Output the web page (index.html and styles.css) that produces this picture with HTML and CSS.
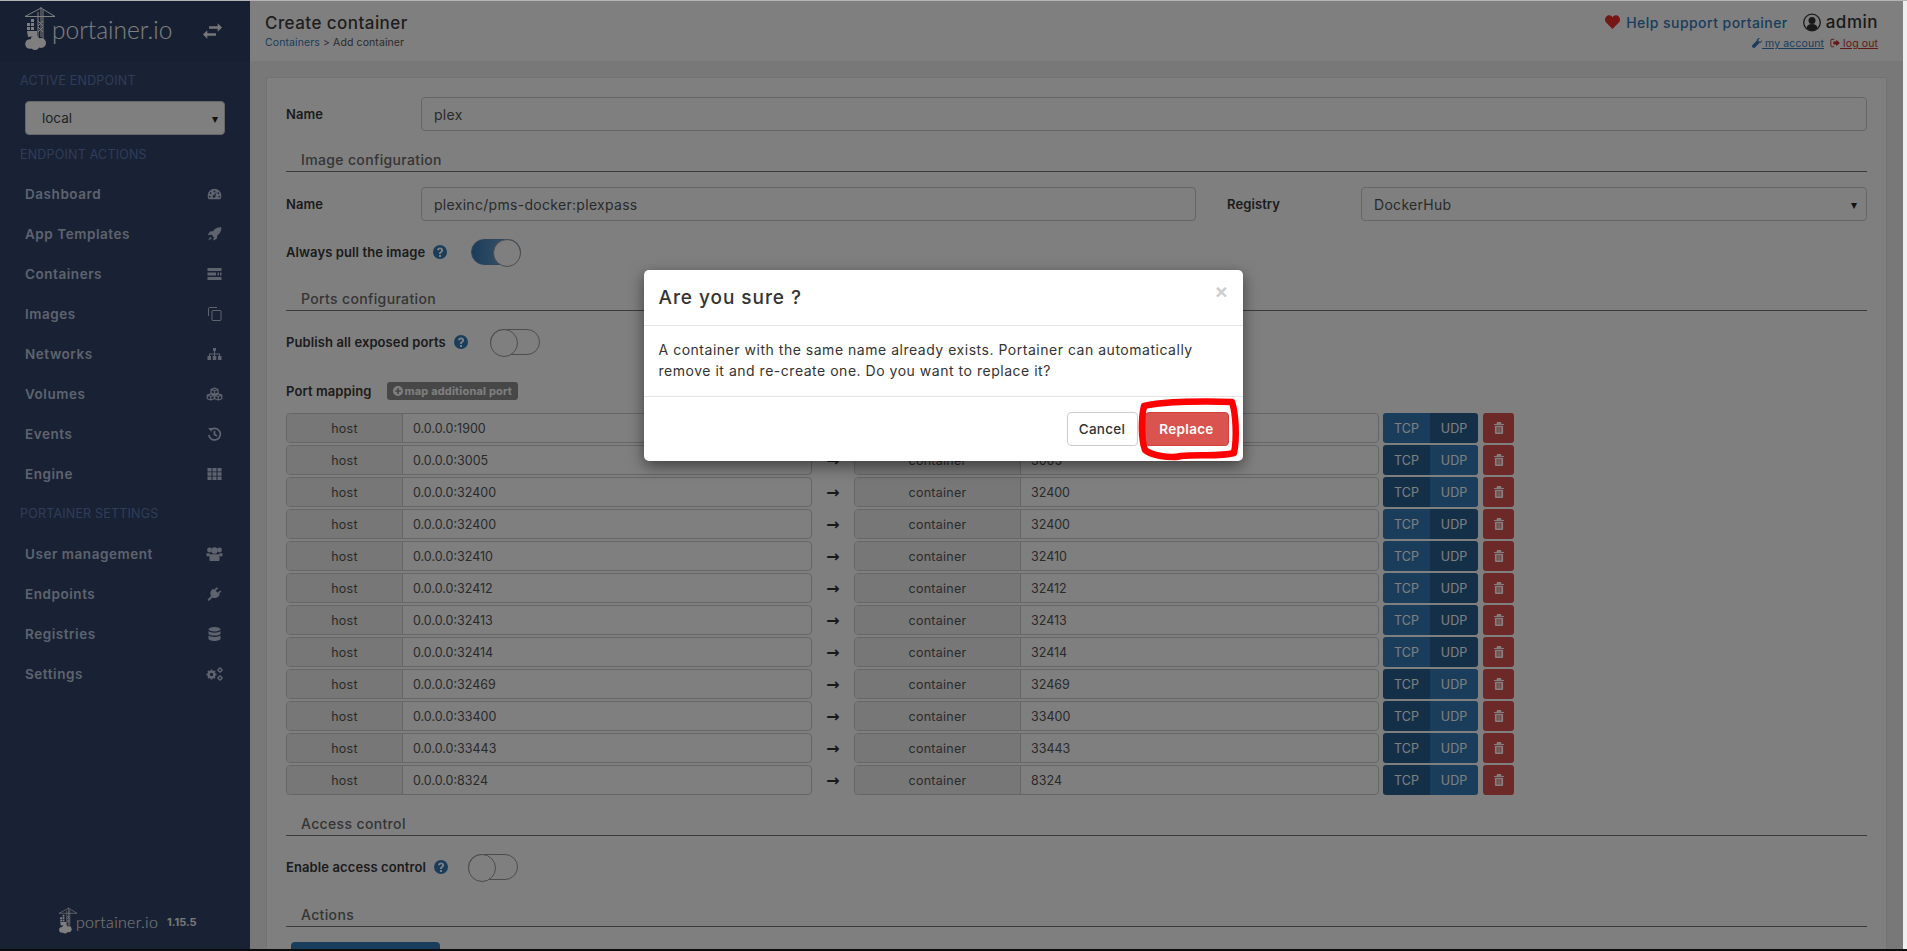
FILE: index.html
```html
<!DOCTYPE html>
<html lang="en">
<head>
<meta charset="utf-8">
<title>Create container</title>
<link rel="stylesheet" href="styles.css">
</head>
<body>
<svg class="defs" width="0" height="0" aria-hidden="true">
  <symbol id="logo" viewBox="0 0 30 43">
    <g fill="none" stroke="currentColor" stroke-width="1">
      <path d="M0 9.500 16 1 30 9.500M0 9.500H30M16 0V30M13 5V30M18 3V34M13 14 18 19M18 14 13 19M13 20 18 25M18 20 13 25"/>
    </g>
    <g fill="currentColor">
      <rect x="2" y="16" width="3" height="3"/><rect x="6" y="16" width="3" height="3"/>
      <rect x="6" y="12" width="3" height="3"/>
      <rect x="2" y="20" width="3" height="3"/><rect x="6" y="20" width="3" height="3"/>
      <path d="M2 24H12V29L3 30Z"/>
      <circle cx="5" cy="37" r="4.800"/><circle cx="10" cy="33" r="4.500"/><circle cx="16" cy="36" r="5"/><circle cx="10" cy="38.500" r="4.500"/>
    </g>
  </symbol>
  <symbol id="i-dash" viewBox="0 0 16 14"><path fill="currentColor" fill-rule="evenodd" d="M8 1a8 8 0 0 1 8 8c0 1.600-.4 3-1.200 4H1.200C.4 12 0 10.600 0 9a8 8 0 0 1 8-8ZM8 3a1 1 0 1 0 0 2 1 1 0 0 0 0-2ZM3.500 5a1 1 0 1 0 0 2 1 1 0 0 0 0-2ZM12.500 5a1 1 0 1 0 0 2 1 1 0 0 0 0-2ZM2.500 9a1 1 0 1 0 0 2 1 1 0 0 0 0-2ZM13.500 9a1 1 0 1 0 0 2 1 1 0 0 0 0-2ZM10.600 4.700 7.500 8.100a1.600 1.600 0 1 0 1.500.9Z"/></symbol>
  <symbol id="i-rocket" viewBox="0 0 14 14"><path fill="currentColor" d="M13.800.2c.3 3.700-1.200 6.300-4 8.300l-.4 3-3 2-.6-.7.6-2.600L3.800 7.600l-2.600.6L.5 7.600l2-3 3-.4C7.500 1.400 10.100-.1 13.800.2ZM2.600 9.700l1.700 1.700L.8 13.200Z"/></symbol>
  <symbol id="i-server" viewBox="0 0 14 12"><path fill="currentColor" d="M0 0h14v3H0ZM0 4.500h8.500v3H0ZM10 4.500h1.500v3H10ZM12.500 4.500H14v3h-1.500ZM0 9h14v3H0Z"/></symbol>
  <symbol id="i-clone" viewBox="0 0 14 14"><path fill="none" stroke="currentColor" stroke-width="1" d="M1 9V1.500a1 1 0 0 1 1-1h7.500M5 3.500h8a.6.600 0 0 1 .5.500v9a.6.600 0 0 1-.5.500H5a.6.600 0 0 1-.5-.500V4a.6.600 0 0 1 .5-.5Z"/></symbol>
  <symbol id="i-sitemap" viewBox="0 0 14 12"><path fill="currentColor" d="M5.500 0h3v3h-3ZM6.500 3h1v2.500h5v2.500h-1V6.500h-4V8h-1V6.500h-4V8h-1V5.500h5ZM0 8h3.500v4H0ZM5.200 8h3.600v4H5.200ZM10.500 8H14v4h-3.500Z"/></symbol>
  <symbol id="i-cubes" viewBox="0 0 18 14"><g fill="none" stroke="currentColor" stroke-width="1.300" stroke-linejoin="round"><path d="M9 .8 12.700 2.200V6L9 7.400 5.300 6V2.200ZM5.300 2.200 9 3.600 12.700 2.200M9 3.600V7.400"/><path d="M5 6.800 8.700 8.200V12L5 13.400 1.300 12V8.200ZM1.300 8.200 5 9.600 8.700 8.200M5 9.600V13.400"/><path d="M13 6.800 16.700 8.200V12L13 13.400 9.300 12V8.200ZM9.300 8.200 13 9.600 16.700 8.200M13 9.600V13.400"/></g></symbol>
  <symbol id="i-history" viewBox="0 0 14 14"><path fill="none" stroke="currentColor" stroke-width="1.700" d="M2.600 3.400A5.800 5.800 0 1 1 1.300 8M7 3.800V7.500L9.500 9"/><path fill="currentColor" d="M.5 1h3.800v3.800Z"/></symbol>
  <symbol id="i-th" viewBox="0 0 14 12"><path fill="currentColor" d="M0 0h4v3.400H0ZM5 0h4v3.400H5ZM10 0h4v3.400h-4ZM0 4.300h4v3.400H0ZM5 4.300h4v3.400H5ZM10 4.300h4v3.400h-4ZM0 8.600h4V12H0ZM5 8.600h4V12H5ZM10 8.600h4V12h-4Z"/></symbol>
  <symbol id="i-users" viewBox="0 0 16 14"><g fill="currentColor"><circle cx="3" cy="3" r="2.400"/><circle cx="13" cy="3" r="2.400"/><circle cx="8" cy="3.500" r="3.200"/><path d="M0 6.300h3.300c-.3 1-.3 2 0 3H.8C.2 9.300 0 8.900 0 8.400ZM16 6.300h-3.300c.3 1 .3 2 0 3h2.500c.6 0 .8-.4.8-.9ZM4 7.200h8c.8 0 1 1 1 2.500V13c0 .6-.4 1-1 1H4c-.6 0-1-.4-1-1V9.700C3 8.200 3.200 7.200 4 7.200Z"/></g></symbol>
  <symbol id="i-plug" viewBox="0 0 14 14"><path fill="currentColor" d="M9.400.2 10.600 1.400 8.200 3.800 10.200 5.800 12.600 3.400l1.200 1.200-2.400 2.400 1 1-1.300 1.300C9.400 11.400 7 11.500 5 10.400L3 12.500 1 14 0 13l1.500-2L3.600 9C2.500 7 2.600 4.600 4.200 3L5.500 1.700l1 1Z"/></symbol>
  <symbol id="i-db" viewBox="0 0 12 14"><g fill="currentColor"><ellipse cx="6" cy="2.200" rx="6" ry="2.200"/><path d="M0 4c1 1.200 3.200 1.700 6 1.700S11 5.200 12 4v2.400c0 1.200-2.700 2.200-6 2.200S0 7.600 0 6.400ZM0 8.200c1 1.200 3.200 1.700 6 1.700s5-.5 6-1.700v3.600C12 13 9.300 14 6 14s-6-1-6-2.200Z"/></g></symbol>
  <symbol id="i-cogs" viewBox="0 0 17 14"><g fill="none" stroke="currentColor"><circle cx="5.500" cy="7.500" r="2.800" stroke-width="2.200"/><path stroke-width="1.800" d="M5.500 2.500V4.500M5.500 10.500v2M.5 7.500h2M8.500 7.500h2M2 4l1.400 1.400M7.600 9.600 9 11M9 4 7.600 5.400M3.400 9.600 2 11"/><circle cx="14" cy="3" r="1.700" stroke-width="1.300"/><circle cx="14" cy="11" r="1.700" stroke-width="1.300"/><path stroke-width="1" d="M14 0V1M14 5V6M11 3H12M16 3H17M14 8V9M14 13V14M11 11H12M16 11H17"/></g></symbol>
  <symbol id="i-help" viewBox="0 0 14 14"><path fill="currentColor" fill-rule="evenodd" d="M7 0a7 7 0 1 1 0 14A7 7 0 0 1 7 0ZM6 10v2h2v-2ZM7 2.500C5.300 2.500 4.200 3.400 4 5l1.800.4c.1-.8.500-1.200 1.200-1.200.6 0 1.100.4 1.100 1 0 .5-.3.800-.9 1.200C6.400 6.900 6 7.500 6 8.500V9h2v-.3c0-.5.200-.8.800-1.200.9-.6 1.300-1.300 1.300-2.300 0-1.600-1.300-2.700-3.100-2.700Z"/></symbol>
  <symbol id="i-heart" viewBox="0 0 14 13"><path fill="currentColor" d="M7 13 1 7C-.4 5.500-.3 2.800 1.200 1.300 2.900-.3 5.400 0 7 2c1.600-2 4.100-2.300 5.800-.7 1.500 1.500 1.600 4.200.2 5.700Z"/></symbol>
  <symbol id="i-user" viewBox="0 0 18 18"><circle cx="9" cy="9" r="8.300" fill="none" stroke="currentColor" stroke-width="1.300"/><circle cx="9" cy="7" r="3.500" fill="currentColor"/><path fill="currentColor" d="M3.500 15c.2-3 2-4.500 5.500-4.500s5.300 1.500 5.500 4.500c-3 2.600-8 2.600-11 0Z"/></symbol>
  <symbol id="i-wrench" viewBox="0 0 12 12"><path fill="currentColor" d="M11.800 2.600c.5 1.800-.9 3.700-2.900 3.500L3 12 .5 11.500 0 9l5.900-5.900C5.700 1.100 7.600-.3 9.400.2L7.500 2.100l.4 2 2 .4Z"/></symbol>
  <symbol id="i-signout" viewBox="0 0 12 11"><path fill="none" stroke="currentColor" stroke-width="1.200" d="M5 1H2a1 1 0 0 0-1 1v7a1 1 0 0 0 1 1h3"/><path fill="currentColor" d="M4 3.800h3.500V1.500L11.800 5.500 7.500 9.500V7.200H4Z"/></symbol>
  <symbol id="i-swap" viewBox="0 0 22 18"><path fill="currentColor" d="M7 3.500h10V0l5 5-5 5V6.500H7ZM5 8v3.500h10v3H5V18l-5-5Z"/></symbol>
  <symbol id="i-trash" viewBox="0 0 11 13"><path fill="currentColor" fill-rule="evenodd" d="M3.500 0h4l.8 2H11v1.200H0V2h2.700ZM1 4h9v8a1 1 0 0 1-1 1H2a1 1 0 0 1-1-1ZM3 5.500v6h.9v-6ZM5 5.500v6h.9v-6ZM7 5.500v6h.9v-6Z"/></symbol>
  <symbol id="i-plus" viewBox="0 0 12 12"><path fill="currentColor" fill-rule="evenodd" d="M6 0a6 6 0 1 1 0 12A6 6 0 0 1 6 0ZM5 2.500V5H2.500v2H5v2.500h2V7h2.500V5H7V2.500Z"/></symbol>
</svg>

<div class="line-top"></div>
<div class="screen">
  <div class="app">
    <aside class="sidebar">
      <div class="brand">
        <svg class="brand-logo"><use href="#logo"/></svg>
        <span class="brand-name">portainer.io</span>
        <svg class="brand-swap"><use href="#i-swap"/></svg>
      </div>
      <div class="side-head side-head-first">ACTIVE ENDPOINT</div>
      <div class="endpoint"><span>local</span><span class="caret">▾</span></div>
      <div class="side-head side-head-actions">ENDPOINT ACTIONS</div>
      <nav class="nav">
        <a class="nav-item"><span>Dashboard</span><svg class="nav-icon icon-sm"><use href="#i-dash"/></svg></a>
        <a class="nav-item"><span>App Templates</span><svg class="nav-icon"><use href="#i-rocket"/></svg></a>
        <a class="nav-item"><span>Containers</span><svg class="nav-icon icon-sm"><use href="#i-server"/></svg></a>
        <a class="nav-item"><span>Images</span><svg class="nav-icon"><use href="#i-clone"/></svg></a>
        <a class="nav-item"><span>Networks</span><svg class="nav-icon icon-sm"><use href="#i-sitemap"/></svg></a>
        <a class="nav-item"><span>Volumes</span><svg class="nav-icon"><use href="#i-cubes"/></svg></a>
        <a class="nav-item"><span>Events</span><svg class="nav-icon"><use href="#i-history"/></svg></a>
        <a class="nav-item"><span>Engine</span><svg class="nav-icon icon-sm"><use href="#i-th"/></svg></a>
      </nav>
      <div class="side-head side-head-nav">PORTAINER SETTINGS</div>
      <nav class="nav">
        <a class="nav-item"><span>User management</span><svg class="nav-icon"><use href="#i-users"/></svg></a>
        <a class="nav-item"><span>Endpoints</span><svg class="nav-icon"><use href="#i-plug"/></svg></a>
        <a class="nav-item"><span>Registries</span><svg class="nav-icon"><use href="#i-db"/></svg></a>
        <a class="nav-item"><span>Settings</span><svg class="nav-icon"><use href="#i-cogs"/></svg></a>
      </nav>
      <div class="side-foot">
        <svg class="foot-logo"><use href="#logo"/></svg>
        <span class="foot-name">portainer.io</span>
        <span class="foot-ver">1.15.5</span>
      </div>
    </aside>

    <main class="main">
      <header class="topbar">
        <div>
          <div class="page-title">Create container</div>
          <div class="crumbs"><a class="link">Containers</a> &gt; Add container</div>
        </div>
        <div class="account">
          <div class="account-top">
            <svg class="ic-heart"><use href="#i-heart"/></svg>
            <a class="link help">Help support portainer</a>
            <svg class="ic-user"><use href="#i-user"/></svg>
            <span class="admin">admin</span>
          </div>
          <div class="account-links">
            <a class="link acc-link"><svg class="ic-small"><use href="#i-wrench"/></svg> my account </a>
            <a class="logout acc-link"><svg class="ic-small"><use href="#i-signout"/></svg> log out</a>
          </div>
        </div>
      </header>

      <section class="content">
        <div class="panel">
          <div class="form-row row-name">
            <label class="label label-w">Name</label>
            <div class="input grow">plex</div>
          </div>
          <div class="section s-image">Image configuration</div>
          <div class="form-row row-image">
            <label class="label label-w">Name</label>
            <div class="input image-input">plexinc/pms-docker:plexpass</div>
            <label class="label registry-label">Registry</label>
            <div class="input grow select">DockerHub<span class="caret dark">▾</span></div>
          </div>
          <div class="form-row row-pull">
            <label class="label">Always pull the image</label>
            <svg class="ic-help"><use href="#i-help"/></svg>
            <span class="toggle on pull-toggle"></span>
          </div>
          <div class="section s-ports">Ports configuration</div>
          <div class="form-row row-publish">
            <label class="label">Publish all exposed ports</label>
            <svg class="ic-help"><use href="#i-help"/></svg>
            <span class="toggle pub-toggle"></span>
          </div>
          <div class="form-row row-map">
            <label class="label">Port mapping</label>
            <span class="badge"><svg class="ic-plus"><use href="#i-plus"/></svg>map additional port</span>
          </div>

          <div class="ports">
            <div class="port"><div class="group g-host"><span class="addon">host</span><span class="val">0.0.0.0:1900</span></div><span class="arrow">→</span><div class="group g-cont"><span class="addon a-cont">container</span><span class="val">1900</span></div><div class="proto"><span class="p">TCP</span><span class="p act">UDP</span></div><button class="del"><svg class="ic-trash"><use href="#i-trash"/></svg></button></div>
            <div class="port"><div class="group g-host"><span class="addon">host</span><span class="val">0.0.0.0:3005</span></div><span class="arrow">→</span><div class="group g-cont"><span class="addon a-cont">container</span><span class="val">3005</span></div><div class="proto"><span class="p act">TCP</span><span class="p">UDP</span></div><button class="del"><svg class="ic-trash"><use href="#i-trash"/></svg></button></div>
            <div class="port"><div class="group g-host"><span class="addon">host</span><span class="val">0.0.0.0:32400</span></div><span class="arrow">→</span><div class="group g-cont"><span class="addon a-cont">container</span><span class="val">32400</span></div><div class="proto"><span class="p act">TCP</span><span class="p">UDP</span></div><button class="del"><svg class="ic-trash"><use href="#i-trash"/></svg></button></div>
            <div class="port"><div class="group g-host"><span class="addon">host</span><span class="val">0.0.0.0:32400</span></div><span class="arrow">→</span><div class="group g-cont"><span class="addon a-cont">container</span><span class="val">32400</span></div><div class="proto"><span class="p">TCP</span><span class="p act">UDP</span></div><button class="del"><svg class="ic-trash"><use href="#i-trash"/></svg></button></div>
            <div class="port"><div class="group g-host"><span class="addon">host</span><span class="val">0.0.0.0:32410</span></div><span class="arrow">→</span><div class="group g-cont"><span class="addon a-cont">container</span><span class="val">32410</span></div><div class="proto"><span class="p">TCP</span><span class="p act">UDP</span></div><button class="del"><svg class="ic-trash"><use href="#i-trash"/></svg></button></div>
            <div class="port"><div class="group g-host"><span class="addon">host</span><span class="val">0.0.0.0:32412</span></div><span class="arrow">→</span><div class="group g-cont"><span class="addon a-cont">container</span><span class="val">32412</span></div><div class="proto"><span class="p">TCP</span><span class="p act">UDP</span></div><button class="del"><svg class="ic-trash"><use href="#i-trash"/></svg></button></div>
            <div class="port"><div class="group g-host"><span class="addon">host</span><span class="val">0.0.0.0:32413</span></div><span class="arrow">→</span><div class="group g-cont"><span class="addon a-cont">container</span><span class="val">32413</span></div><div class="proto"><span class="p">TCP</span><span class="p act">UDP</span></div><button class="del"><svg class="ic-trash"><use href="#i-trash"/></svg></button></div>
            <div class="port"><div class="group g-host"><span class="addon">host</span><span class="val">0.0.0.0:32414</span></div><span class="arrow">→</span><div class="group g-cont"><span class="addon a-cont">container</span><span class="val">32414</span></div><div class="proto"><span class="p">TCP</span><span class="p act">UDP</span></div><button class="del"><svg class="ic-trash"><use href="#i-trash"/></svg></button></div>
            <div class="port"><div class="group g-host"><span class="addon">host</span><span class="val">0.0.0.0:32469</span></div><span class="arrow">→</span><div class="group g-cont"><span class="addon a-cont">container</span><span class="val">32469</span></div><div class="proto"><span class="p act">TCP</span><span class="p">UDP</span></div><button class="del"><svg class="ic-trash"><use href="#i-trash"/></svg></button></div>
            <div class="port"><div class="group g-host"><span class="addon">host</span><span class="val">0.0.0.0:33400</span></div><span class="arrow">→</span><div class="group g-cont"><span class="addon a-cont">container</span><span class="val">33400</span></div><div class="proto"><span class="p act">TCP</span><span class="p">UDP</span></div><button class="del"><svg class="ic-trash"><use href="#i-trash"/></svg></button></div>
            <div class="port"><div class="group g-host"><span class="addon">host</span><span class="val">0.0.0.0:33443</span></div><span class="arrow">→</span><div class="group g-cont"><span class="addon a-cont">container</span><span class="val">33443</span></div><div class="proto"><span class="p act">TCP</span><span class="p">UDP</span></div><button class="del"><svg class="ic-trash"><use href="#i-trash"/></svg></button></div>
            <div class="port"><div class="group g-host"><span class="addon">host</span><span class="val">0.0.0.0:8324</span></div><span class="arrow">→</span><div class="group g-cont"><span class="addon a-cont">container</span><span class="val">8324</span></div><div class="proto"><span class="p act">TCP</span><span class="p">UDP</span></div><button class="del"><svg class="ic-trash"><use href="#i-trash"/></svg></button></div>
          </div>

          <div class="section s-access">Access control</div>
          <div class="form-row row-access">
            <label class="label">Enable access control</label>
            <svg class="ic-help"><use href="#i-help"/></svg>
            <span class="toggle access-toggle"></span>
          </div>
          <div class="section s-actions">Actions</div>
          <div class="deploy"></div>
        </div>
      </section>
    </main>

    <div class="backdrop">
      <div class="modal">
        <div class="modal-head">
          <span class="modal-title">Are you sure ?</span>
          <span class="modal-close">×</span>
        </div>
        <div class="modal-body">A container with the same name already exists. Portainer can automatically remove it and re-create one. Do you want to replace it?</div>
        <div class="modal-foot">
          <button class="btn btn-cancel">Cancel</button>
          <button class="btn btn-replace">Replace</button>
          <svg class="ring" viewBox="0 0 100 62" preserveAspectRatio="none"><path d="M5 7C25 2 70 2 93 3 97 15 98 40 95 54 80 58 60 55 42 57 30 60 12 56 6 51 2 40 2 20 5 7Z" fill="none" stroke="#f00" stroke-width="6.500" stroke-linejoin="round"/></svg>
        </div>
      </div>
    </div>
  </div>
  <div class="line-right"></div>
</div>
<div class="line-bottom"></div>
</body>
</html>
```

FILE: styles.css
```css
* { box-sizing: border-box; }
html, body { margin: 0; padding: 0; height: 951px; overflow: hidden; }
body {
  display: flex;
  flex-direction: column;
  font-family: Inter, "Open Sans", "Liberation Sans", sans-serif;
  font-size: 13px;
  color: #383838;
  background: #fff;
}
.defs { position: absolute; }
a { text-decoration: none; }

.line-top { height: 1px; background: #b4b4b4; flex: none; }
.line-bottom { height: 2px; background: #0c0c0c; flex: none; }
.line-right { width: 4px; background: #efefef; flex: none; }
.screen { flex: 1; display: flex; min-height: 0; }
.app { flex: 1; display: flex; position: relative; min-width: 0; overflow: hidden; }

/* sidebar */
.sidebar {
  width: 250px;
  flex: none;
  background: #324268;
  color: #bcc7dc;
  display: flex;
  flex-direction: column;
}
.brand {
  height: 60px;
  background: #2f3f64;
  color: #fff;
  display: flex;
  align-items: flex-start;
  padding: 6px 0 0 25px;
  flex: none;
}
.brand-logo { width: 30px; height: 43px; flex: none; }
.brand-name {
  font-family: Lato, sans-serif;
  font-weight: 300;
  font-size: 24.500px;
  line-height: 30px;
  margin: 8px 0 0 -3px;
  width: 152px;
  letter-spacing: 0;
}
.brand-swap { width: 19px; height: 16px; margin-top: 16px; margin-left: -1px; color: #eee; }
.side-head { color: #5f7bb4; font-size: 12.500px; line-height: 16px; padding-left: 20px; letter-spacing: .2px; flex: none; }
.side-head-first { margin-top: 12px; }
.endpoint {
  margin: 12px 25px 0;
  width: 200px;
  height: 34px;
  background: #fff;
  border: 1px solid #ccc;
  border-radius: 4px;
  color: #444;
  font-size: 13.500px;
  display: flex;
  justify-content: space-between;
  align-items: center;
  padding: 0 6px 0 16px;
  flex: none;
}
.caret { font-size: 12px; color: #222; }
.side-head-actions { margin-top: 12px; }
.side-head-nav { margin-top: 12px; margin-bottom: 12px; }
.nav { display: flex; flex-direction: column; flex: none; }
.side-head-actions + .nav { margin-top: 11px; }
.nav-item {
  height: 40px;
  display: flex;
  align-items: center;
  justify-content: space-between;
  padding: 0 27px 0 25px;
  font-weight: 600;
  font-size: 13.500px;
  letter-spacing: .55px;
  color: #bcc7dc;
}
.nav-icon { width: 17px; height: 14px; color: #bcc7dc; }
.icon-sm { height: 12px; }
.side-foot {
  margin-top: auto;
  height: 42px;
  display: flex;
  align-items: flex-start;
  padding-left: 59px;
  color: #fff;
  flex: none;
}
.foot-logo { width: 18px; height: 27px; flex: none; }
.foot-name { font-family: Lato, sans-serif; font-weight: 300; font-size: 16px; line-height: 20px; margin: 5px 0 0 -1px; width: 91px; letter-spacing: .3px; }
.foot-ver { font-size: 11px; font-weight: 700; line-height: 20px; margin-top: 5px; color: #f0f0f0; }

/* main */
.main { flex: 1; min-width: 0; background: #f0f0f0; display: flex; flex-direction: column; }
.topbar {
  height: 60px;
  background: #fff;
  flex: none;
  display: flex;
  justify-content: space-between;
  padding: 11px 25px 0 15px;
}
.page-title { font-size: 17px; line-height: 20px; font-weight: 500; letter-spacing: .45px; color: #3c3c3c; margin-top: 1px; }
.crumbs { font-size: 10.500px; line-height: 14px; margin-top: 3px; color: #555; letter-spacing: .1px; }
.link { color: #337ab7; }
.account { text-align: right; }
.account-top { display: flex; align-items: center; justify-content: flex-end; height: 20px; }
.ic-heart { width: 15px; height: 14px; color: #f02a2a; margin-right: 6px; }
.help { font-size: 14px; letter-spacing: .45px; font-weight: 500; margin-right: 15px; }
.ic-user { width: 18px; height: 19px; color: #333; margin-right: 5px; }
.admin { font-size: 17px; font-weight: 500; letter-spacing: .5px; color: #333; }
.account-links { display: flex; justify-content: flex-end; gap: 6px; font-size: 10.500px; line-height: 13px; margin-top: 5px; letter-spacing: .1px; }
.acc-link { text-decoration: underline; }
.logout { color: #c9302c; }
.ic-small { width: 10px; height: 10px; vertical-align: -1px; }

.content { flex: 1; padding: 16px 16px 0 16px; min-height: 0; overflow: hidden; }
.panel {
  background: #fff;
  border: 1px solid #e4e4e4;
  border-bottom: 0;
  padding: 19px 19px 0 19px;
  height: 880px;
}
.form-row { display: flex; align-items: center; }
.label { font-weight: 600; font-size: 13px; letter-spacing: .1px; color: #383838; }
.label-w { width: 135px; flex: none; }
.input {
  height: 34px;
  border: 1px solid #ccc;
  border-radius: 4px;
  background: #fff;
  color: #555;
  font-size: 14px;
  letter-spacing: .3px;
  display: flex;
  align-items: center;
  padding: 0 12px;
}
.grow { flex: 1; }
.image-input { width: 775px; flex: none; }
.registry-label { width: 134px; margin-left: 31px; flex: none; }
.select { justify-content: space-between; padding-right: 9px; }
.section {
  border-bottom: 1px solid #777;
  padding: 2px 0 0 15px;
  font-size: 14px;
  font-weight: 500;
  letter-spacing: .35px;
  color: #6a6a6a;
  height: 23px;
  line-height: 18px;
}
.s-image { margin-top: 18px; }
.row-image { margin-top: 15px; }
.row-pull { margin-top: 18px; height: 26px; }
.ic-help { width: 14px; height: 14px; color: #337ab7; margin-left: 8px; flex: none; }
.toggle {
  display: block;
  width: 50px;
  height: 26px;
  border: 1px solid #999;
  border-radius: 13px;
  position: relative;
  background: #fff;
  flex: none;
}
.toggle::after {
  content: "";
  position: absolute;
  left: -1px;
  top: -1px;
  width: 26px;
  height: 26px;
  border-radius: 50%;
  background: #fff;
  border: 1px solid #999;
}
.toggle.on { background: linear-gradient(90deg, #337ab7, #8fb3d4); border-color: #5f8db6; }
.toggle.on::after { left: auto; right: -1px; }
.pull-toggle { margin-left: 24px; }
.s-ports { margin-top: 23px; }
.row-publish { margin-top: 18px; height: 26px; }
.pub-toggle { margin-left: 22px; }
.row-map { margin-top: 27px; height: 18px; }
.badge {
  background: #8f8f8f;
  color: #fff;
  font-size: 11px;
  font-weight: 700;
  height: 18px;
  line-height: 18px;
  border-radius: 3px;
  padding: 0 6px;
  margin-left: 15px;
  display: flex;
  align-items: center;
  letter-spacing: .17px;
}
.ic-plus { width: 10px; height: 10px; margin-right: 2px; }

.ports { margin-top: 13px; display: flex; flex-direction: column; gap: 2px; }
.port { display: flex; align-items: center; height: 30px; }
.group { height: 30px; display: flex; border: 1px solid #ccc; border-radius: 4px; overflow: hidden; font-size: 12.500px; color: #555; letter-spacing: .25px; background: #fff; }
.g-host { width: 526px; }
.g-cont { width: 525px; }
.addon { width: 116px; flex: none; background: #eee; border-right: 1px solid #ccc; display: flex; align-items: center; justify-content: center; }
.a-cont { width: 166px; }
.val { padding-left: 10px; display: flex; align-items: center; letter-spacing: 0; }
.arrow { width: 42px; text-align: center; color: #333; font-size: 16px; font-weight: 700; flex: none; font-family: "DejaVu Sans", sans-serif; }
.proto { display: flex; margin-left: 4px; height: 30px; border-radius: 3px; overflow: hidden; }
.p { width: 47px; background: #337ab7; color: #fff; font-size: 12.500px; display: flex; align-items: center; justify-content: center; }
.p.act { background: #286090; }
.p + .p { width: 48px; }
.del { width: 31px; height: 30px; margin-left: 5px; border: 0; border-radius: 3px; background: #d9534f; color: #fff; padding: 0; display: flex; align-items: center; justify-content: center; }
.ic-trash { width: 10px; height: 12px; }

.s-access { margin-top: 18px; }
.row-access { margin-top: 18px; height: 26px; }
.access-toggle { margin-left: 20px; }
.s-actions { margin-top: 24px; }
.deploy { width: 149px; height: 40px; margin: 15px 0 0 5px; background: #337ab7; border-radius: 4px; }

/* modal */
.backdrop {
  position: absolute;
  inset: 0;
  background: rgba(0, 0, 0, .5);
  display: flex;
  justify-content: center;
  align-items: flex-start;
  padding: 269px 0 0 0;
}
.modal {
  width: 599px;
  height: 191px;
  background: #fff;
  border-radius: 5px;
  box-shadow: 0 5px 15px rgba(0, 0, 0, .5);
  margin-left: -17px;
  color: #333;
  display: flex;
  flex-direction: column;
}
.modal-head {
  height: 56px;
  border-bottom: 1px solid #e5e5e5;
  padding: 0 15px;
  display: flex;
  justify-content: space-between;
  flex: none;
}
.modal-title { font-size: 19px; font-weight: 500; letter-spacing: .95px; line-height: 56px; color: #333; }
.modal-close { font-size: 21px; font-weight: 700; color: #ccc; line-height: 44px; font-family: "Liberation Sans", sans-serif; }
.modal-body { padding: 13px 15px 0; height: 71px; border-bottom: 1px solid #e5e5e5; font-size: 14px; line-height: 21px; letter-spacing: .52px; flex: none; }
.modal-foot { flex: 1; display: flex; justify-content: flex-end; align-items: center; gap: 7px; padding: 0 14px 0 0; position: relative; }
.btn { height: 34px; border-radius: 4px; font-family: inherit; font-size: 13.500px; font-weight: 500; letter-spacing: .3px; padding: 0; }
.btn-cancel { width: 71px; background: #fff; border: 1px solid #ccc; color: #333; }
.btn-replace { width: 84px; background: #d9534f; border: 1px solid #d43f3a; color: #fff; font-weight: 600; }
.ring { position: absolute; right: 4px; top: 2px; width: 100px; height: 62px; overflow: visible; }
```
